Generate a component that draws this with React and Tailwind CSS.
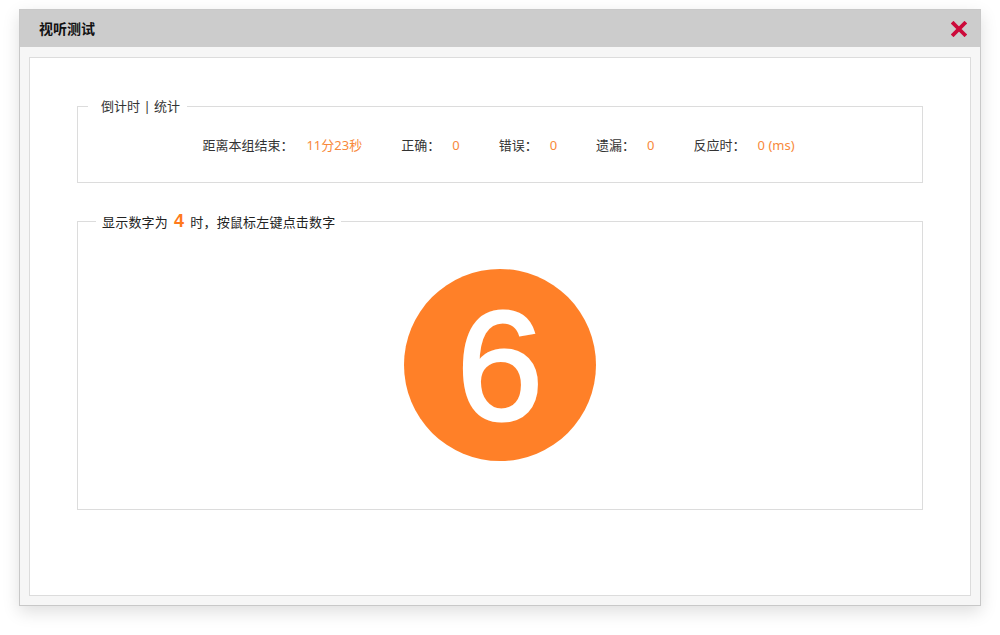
import React from 'react';

const stats = [
    { label: '距离本组结束：', value: '11分23秒' },
    { label: '正确：', value: '0' },
    { label: '错误：', value: '0' },
    { label: '遗漏：', value: '0' },
    { label: '反应时：', value: '0 (ms)' },
];

const CloseIcon = () => (
    <svg width="16" height="16" viewBox="0 0 16 16">
        <path d="M2.5 2.5 L13.5 13.5 M13.5 2.5 L2.5 13.5" stroke="#cc0a3a" strokeWidth="3.8" strokeLinecap="square" />
    </svg>
);

const App = () => {
    return (
        <div
            className="w-[1000px] h-[635px] bg-white pt-[9px] pl-[19px]"
            style={{ fontFamily: '"Noto Sans", "Noto Sans CJK SC", sans-serif' }}
        >
            {/* Dialog */}
            <div className="w-[962px] h-[597px] flex flex-col border border-[#c8c8c8] bg-[#f6f6f6] shadow-[0_6px_16px_rgba(0,0,0,0.13)]">
                {/* Header */}
                <div className="h-[37px] bg-[#cccccc] flex items-center justify-between pl-[19px] pr-[12px] shrink-0">
                    <span className="text-[14px] font-bold text-[#111]">视听测试</span>
                    <button className="w-[18px] h-[18px] flex items-center justify-center">
                        <CloseIcon />
                    </button>
                </div>

                {/* Body */}
                <div className="flex-1 pt-[10px] px-[9px] pb-[9px]">
                    <div className="h-full bg-white border border-[#dcdcdc] pt-[38px] px-[47px]">
                        {/* Countdown / stats */}
                        <fieldset className="border border-[#dcdcdc] px-0">
                            <legend className="ml-[10px] pl-[13px] pr-[7px] h-[20px] leading-[20px] text-[13px] text-[#333]">
                                倒计时 | 统计
                            </legend>
                            <div className="h-[66px] pt-[19px] flex justify-center text-[13px] leading-[20px] pr-[3px]">
                                {stats.map((s, i) => (
                                    <div key={s.label} className={`flex ${i > 0 ? 'ml-[39px]' : ''}`}>
                                        <span className="text-[#333]">{s.label}</span>
                                        <span className={`${i === 0 ? 'ml-[13px]' : 'ml-[12px]'} text-[#f8893a]`}>{s.value}</span>
                                    </div>
                                ))}
                            </div>
                        </fieldset>

                        {/* Target task */}
                        <fieldset className="mt-[27px] border border-[#dcdcdc] px-0">
                            <legend className="ml-[18px] px-[6px] h-[22px] leading-[22px] text-[13px] text-[#222] tracking-[0.2px]">
                                显示数字为<span className="mx-[6px] text-[18px] font-bold text-[#ff7a1c]" style={{ fontFamily: '"Liberation Sans", sans-serif' }}>4</span>时，按鼠标左键点击数字
                            </legend>
                            <div className="pt-[37px] pb-[48px] flex justify-center">
                                <div
                                    className="w-[192px] h-[192px] rounded-full bg-[#ff8028] flex items-center justify-center text-white text-[156px] leading-none [-webkit-text-stroke:3px_white]"
                                    style={{ fontFamily: '"Liberation Sans", Arial, sans-serif' }}
                                >
                                    <span>6</span>
                                </div>
                            </div>
                        </fieldset>
                    </div>
                </div>
            </div>
        </div>
    );
};

export default App;
